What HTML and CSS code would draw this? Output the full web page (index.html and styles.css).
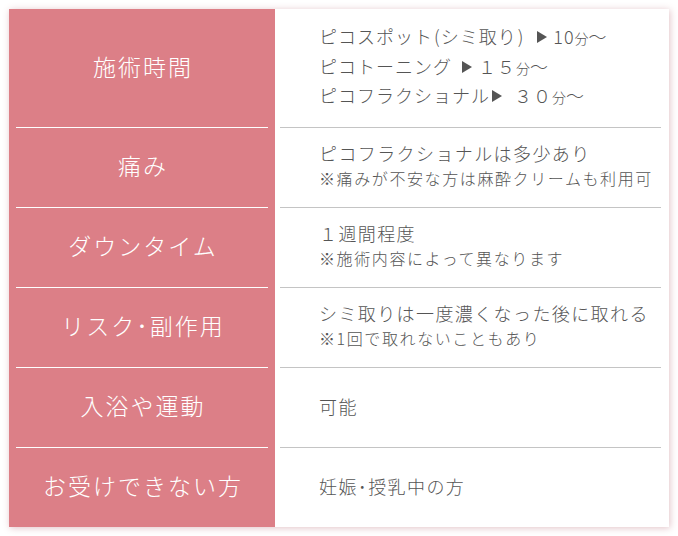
FILE: index.html
```html
<!DOCTYPE html>
<html lang="ja">
<head>
<meta charset="utf-8">
<title>施術情報</title>
<link rel="stylesheet" href="styles.css">
</head>
<body>
<div class="page">
  <div class="card">
    <div class="row row-first">
      <div class="label"><div class="label-in">施術時間</div></div>
      <div class="value"><div class="value-in">
        <div class="lines">
          <p class="line">ピコスポット<span class="paren">(</span>シミ取り<span class="paren">)</span><span class="tri tri-1"></span>10<span class="min">分</span>〜</p>
          <p class="line">ピコトーニング<span class="tri tri-2"></span>１５<span class="min">分</span>〜</p>
          <p class="line">ピコフラクショナル<span class="tri tri-3"></span>３０<span class="min">分</span>〜</p>
        </div>
      </div></div>
    </div>
    <div class="row">
      <div class="label"><div class="label-in">痛み</div></div>
      <div class="value"><div class="value-in">
        <div>
          <p class="main">ピコフラクショナルは多少あり</p>
          <p class="note">※痛みが不安な方は麻酔クリームも利用可</p>
        </div>
      </div></div>
    </div>
    <div class="row">
      <div class="label"><div class="label-in">ダウンタイム</div></div>
      <div class="value"><div class="value-in">
        <div>
          <p class="main">１週間程度</p>
          <p class="note">※施術内容によって異なります</p>
        </div>
      </div></div>
    </div>
    <div class="row">
      <div class="label"><div class="label-in">リスク･副作用</div></div>
      <div class="value"><div class="value-in">
        <div>
          <p class="main">シミ取りは一度濃くなった後に取れる</p>
          <p class="note">※1回で取れないこともあり</p>
        </div>
      </div></div>
    </div>
    <div class="row">
      <div class="label"><div class="label-in">入浴や運動</div></div>
      <div class="value"><div class="value-in">
        <p class="main">可能</p>
      </div></div>
    </div>
    <div class="row row-last">
      <div class="label"><div class="label-in">お受けできない方</div></div>
      <div class="value"><div class="value-in">
        <p class="main">妊娠･授乳中の方</p>
      </div></div>
    </div>
  </div>
</div>
</body>
</html>
```

FILE: styles.css
```css
* { box-sizing: border-box; }
html, body { margin: 0; padding: 0; background: #ffffff; }
body {
  font-family: "Noto Sans CJK JP", "Noto Sans", sans-serif;
  font-weight: 300;
  color: #555555;
}
p { margin: 0; }
.page { padding: 9px; }
.card {
  width: 660px;
  background: #ffffff;
  box-shadow: 1px 1px 7px rgba(190, 120, 130, 0.45);
  display: flex;
  flex-direction: column;
}
.row {
  display: grid;
  grid-template-columns: 266px 1fr;
  height: 80px;
}
.row-first { height: 119px; }
.row-last { height: 79px; }
.label {
  background: #dc7f87;
  padding: 0 7px;
}
.label-in {
  height: 100%;
  display: flex;
  align-items: center;
  justify-content: center;
  border-bottom: 1px solid #ffffff;
  color: #ffffff;
  font-size: 23px;
  letter-spacing: 2px;
  padding: 0 0 5px 2px;
}
.value { padding: 0 8px 0 5px; }
.value-in {
  height: 100%;
  display: flex;
  align-items: center;
  border-bottom: 1px solid #c4c4c4;
  padding: 0 0 4px 39px;
}
.row-first .value-in { padding-bottom: 3px; }
.row-last .label-in, .row-last .value-in { border-bottom: none; }
.line {
  font-size: 18px;
  line-height: 29.5px;
  letter-spacing: 1px;
}
.paren { margin: 0 1px 0 1px; letter-spacing: 0; }
.main {
  font-size: 18px;
  line-height: 26px;
  letter-spacing: 1.4px;
}
.note {
  font-size: 16px;
  line-height: 25px;
  letter-spacing: 1.6px;
}
.min { font-size: 14px; letter-spacing: 0; line-height: 0; }
.tri {
  display: inline-block;
  width: 0;
  height: 0;
  border-top: 6px solid transparent;
  border-bottom: 6px solid transparent;
  border-left: 10px solid #555555;
  vertical-align: 1px;
}
.tri-1 { margin: 0 6px 0 13px; }
.tri-2 { margin: 0 6px 0 10px; }
.tri-3 { margin: 0 12px 0 2px; }
```
